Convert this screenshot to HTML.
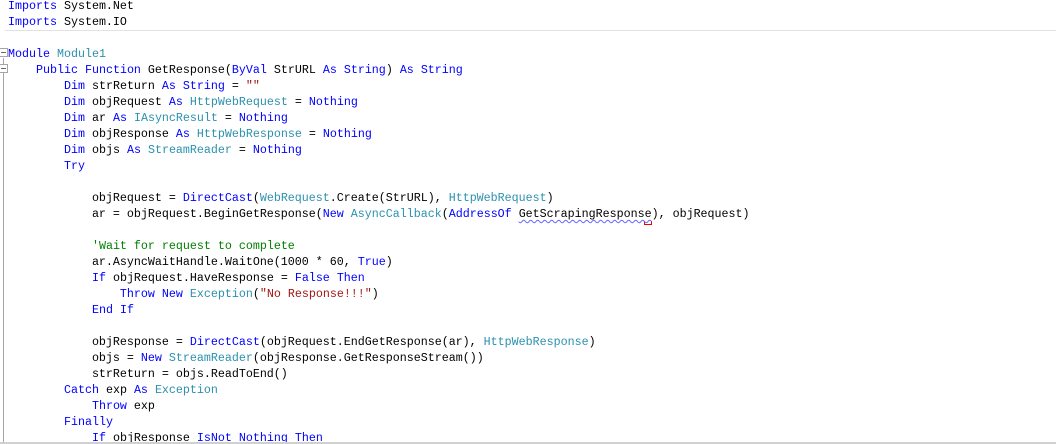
<!DOCTYPE html>
<html><head><style>
html,body{margin:0;padding:0;background:#fff;width:1056px;height:444px;overflow:hidden;position:relative}
pre{position:absolute;left:8px;top:-2px;margin:0;font-family:"Liberation Mono",monospace;font-size:11.67px;line-height:16px;color:#000}
.k{color:#0000ff}.t{color:#2b91af}.s{color:#a31515}.c{color:#008000}
.sq{text-decoration:underline wavy #6464ff;text-decoration-thickness:1px;text-underline-offset:2px}
.sep{position:absolute;left:5px;right:0;top:30px;height:1px;background:#e2e2e2}
.vl{position:absolute;left:3px;top:58px;width:1px;height:384px;background:#a5a5a5}
.bx{position:absolute;width:7px;height:7px;border:1px solid #a5a5a5;background:#fff;left:-1px}
.bx:after{content:"";position:absolute;left:1px;top:3px;width:5px;height:1px;background:#666}
.bot{position:absolute;left:0;right:0;top:442px;height:2px;background:#d0d0d0}
.red{position:absolute;left:644px;top:221px;width:6px;height:3px;border:1px solid #e00;border-top:none}
</style></head><body>
<div class="sep"></div>
<div class="vl"></div>
<div class="bx" style="top:48px"></div>
<div class="bx" style="top:64px"></div>
<div class="red"></div>
<pre><span class="k">Imports</span> System.Net
<span class="k">Imports</span> System.IO

<span class="k">Module</span> <span class="t">Module1</span>
    <span class="k">Public</span> <span class="k">Function</span> GetResponse(<span class="k">ByVal</span> StrURL <span class="k">As</span> <span class="k">String</span>) <span class="k">As</span> <span class="k">String</span>
        <span class="k">Dim</span> strReturn <span class="k">As</span> <span class="k">String</span> = <span class="s">""</span>
        <span class="k">Dim</span> objRequest <span class="k">As</span> <span class="t">HttpWebRequest</span> = <span class="k">Nothing</span>
        <span class="k">Dim</span> ar <span class="k">As</span> <span class="t">IAsyncResult</span> = <span class="k">Nothing</span>
        <span class="k">Dim</span> objResponse <span class="k">As</span> <span class="t">HttpWebResponse</span> = <span class="k">Nothing</span>
        <span class="k">Dim</span> objs <span class="k">As</span> <span class="t">StreamReader</span> = <span class="k">Nothing</span>
        <span class="k">Try</span>

            objRequest = <span class="k">DirectCast</span>(<span class="t">WebRequest</span>.Create(StrURL), <span class="t">HttpWebRequest</span>)
            ar = objRequest.BeginGetResponse(<span class="k">New</span> <span class="t">AsyncCallback</span>(<span class="k">AddressOf</span> <span class="sq">GetScrapingResponse</span>), objRequest)

            <span class="c">'Wait for request to complete</span>
            ar.AsyncWaitHandle.WaitOne(1000 * 60, <span class="k">True</span>)
            <span class="k">If</span> objRequest.HaveResponse = <span class="k">False</span> <span class="k">Then</span>
                <span class="k">Throw</span> <span class="k">New</span> <span class="t">Exception</span>(<span class="s">"No Response!!!"</span>)
            <span class="k">End</span> <span class="k">If</span>

            objResponse = <span class="k">DirectCast</span>(objRequest.EndGetResponse(ar), <span class="t">HttpWebResponse</span>)
            objs = <span class="k">New</span> <span class="t">StreamReader</span>(objResponse.GetResponseStream())
            strReturn = objs.ReadToEnd()
        <span class="k">Catch</span> exp <span class="k">As</span> <span class="t">Exception</span>
            <span class="k">Throw</span> exp
        <span class="k">Finally</span>
            <span class="k">If</span> objResponse <span class="k">IsNot</span> <span class="k">Nothing</span> <span class="k">Then</span></pre>
<div class="bot"></div>
</body></html>
